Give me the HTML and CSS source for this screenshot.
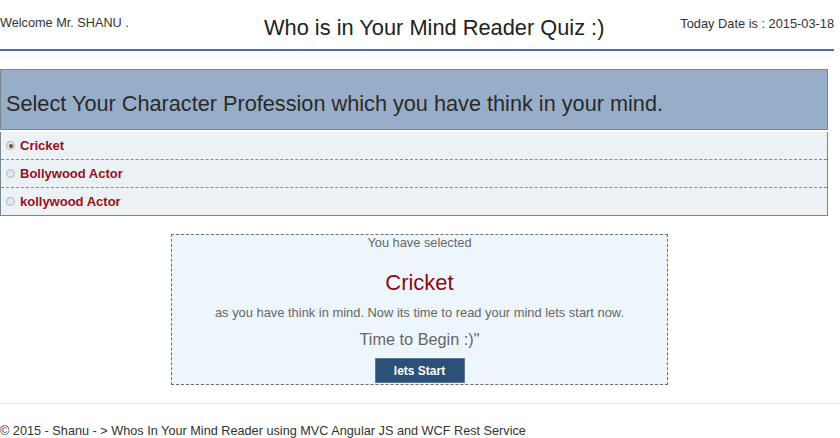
FILE: index.html
```html
<!DOCTYPE html>
<html>
<head>
<meta charset="utf-8">
<title>Who is in Your Mind Reader Quiz</title>
<link rel="stylesheet" href="styles.css">
</head>
<body>
<header class="top">
  <div class="welcome">Welcome Mr. SHANU .</div>
  <h1 class="title">Who is in Your Mind Reader Quiz :)</h1>
  <div class="date">Today Date is : 2015-03-18</div>
</header>

<section class="panel">
  <h2 class="panel-head">Select Your Character Profession which you have think in your mind.</h2>
  <ul class="options">
    <li class="option"><input type="radio" name="prof" checked><span>Cricket</span></li>
    <li class="option"><input type="radio" name="prof"><span>Bollywood Actor</span></li>
    <li class="option"><input type="radio" name="prof"><span>kollywood Actor</span></li>
  </ul>
</section>

<section class="result">
  <div class="result-label">You have selected</div>
  <div class="result-name">Cricket</div>
  <div class="result-text">as you have think in mind. Now its time to read your mind lets start now.</div>
  <div class="result-begin">Time to Begin :)"</div>
  <button class="start">lets Start</button>
</section>

<footer class="foot">
  <p>&copy; 2015 - Shanu - &gt; Whos In Your Mind Reader using MVC Angular JS and WCF Rest Service</p>
</footer>
</body>
</html>
```

FILE: styles.css
```css
* { box-sizing: border-box; }
html, body { margin: 0; padding: 0; background: #fff; }
body {
  font-family: "Liberation Sans", Arial, sans-serif;
  color: #333;
  font-size: 12.8px;
  width: 840px;
  height: 438px;
  overflow: hidden;
}
.top {
  width: 834px;
  height: 51px;
  border-bottom: 2px solid #4a6ea6;
  display: grid;
  grid-template-columns: 264px auto 1fr;
  align-items: start;
}
.welcome { padding-top: 16px; font-size: 12.7px; color: #333; }
.title {
  margin: 0;
  padding-top: 15px;
  font-size: 21.8px;
  font-weight: normal;
  color: #222;
  line-height: 26px;
}
.date { justify-self: end; padding-top: 16px; font-size: 12.8px; color: #333; }

.panel { margin-top: 18px; width: 828px; }
.panel-head {
  margin: 0;
  height: 61px;
  background: #98aec8;
  border: 1px solid #7b8790;
  font-size: 21.7px;
  font-weight: normal;
  color: #2a2a2a;
  padding: 21px 0 0 5px;
  line-height: 26px;
}
.options {
  list-style: none;
  margin: 2px 0 0 0;
  padding: 0;
  background: #ebf1f4;
  border: 1px solid #7b8790;
  border-top: none;
}
.option {
  height: 28px;
  display: flex;
  align-items: center;
  border-top: 1px dashed #8a8a8a;
  padding-left: 5px;
}
.option:first-child { border-top: none; height: 27px; }
.option input {
  appearance: none;
  -webkit-appearance: none;
  margin: 0 5px 0 0;
  width: 9px;
  height: 9px;
  border-radius: 50%;
  border: 1px solid #b5b5b5;
  background: #e6e6e6;
  position: relative;
}
.option input:checked::after {
  content: "";
  position: absolute;
  left: 1.5px; top: 1.5px;
  width: 4px; height: 4px;
  border-radius: 50%;
  background: #555;
}
.option span { font-weight: bold; font-size: 13px; color: #990f1c; }

.result {
  margin: 18px 0 0 171px;
  width: 497px;
  height: 151px;
  border: 1px dashed #6e6e6e;
  background: #eef6fd;
  display: flex;
  flex-direction: column;
  align-items: center;
  color: #666;
}
.result-label { font-size: 12.8px; line-height: 14px; padding-top: 1px; }
.result-name { font-size: 22px; color: #8b0a14; margin-top: 20px; line-height: 26px; }
.result-text { font-size: 12.9px; margin-top: 10px; line-height: 14px; }
.result-begin { font-size: 16.3px; margin-top: 9px; line-height: 20px; }
.start {
  margin-top: 9px;
  width: 90px;
  height: 25px;
  background: #2b5178;
  border: 1px solid #5a7898;
  color: #fff;
  font-family: "Liberation Sans", Arial, sans-serif;
  font-weight: bold;
  font-size: 12px;
  padding: 0;
}
.foot {
  margin-top: 18px;
  border-top: 1px solid #e8e8e8;
}
.foot p { margin: 0; padding-top: 20px; font-size: 12.7px; line-height: 14px; color: #333; }
```
